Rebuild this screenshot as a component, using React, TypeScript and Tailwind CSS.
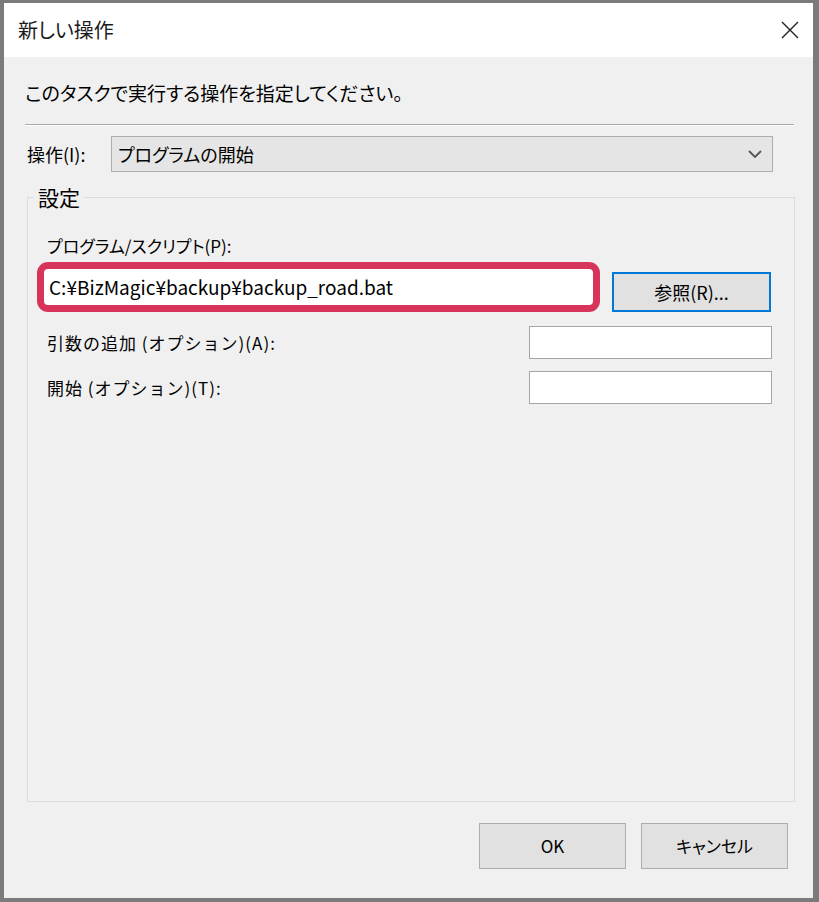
export default function App() {
  return (
    <div className="w-[819px] h-[902px] bg-[#7b7b7b] pt-[3px] pl-[4px] pr-[6px] pb-[4px] flex flex-col font-['Noto_Sans_CJK_JP','Noto_Sans',sans-serif] [font-feature-settings:'palt'] text-black">
      {/* Title bar */}
      <div className="h-[54px] shrink-0 bg-white flex items-center justify-between pl-[14px] pr-[14px]">
        <span className="text-[20px] leading-[24px] text-[#1b1b1b]">新しい操作</span>
        <svg width="18" height="18" viewBox="0 0 18 18" className="text-[#222]">
          <path d="M1 1 L17 17 M17 1 L1 17" stroke="currentColor" strokeWidth="1.4" fill="none" />
        </svg>
      </div>

      {/* Body */}
      <div className="flex-1 bg-[#f0f0f0] flex flex-col">
        <p className="mt-[24px] ml-[21px] text-[19px] leading-[24px]">
          このタスクで実行する操作を指定してください。
        </p>
        <div className="mt-[19px] ml-[21px] mr-[19px] border-t border-[#a8a8a8] border-b border-b-white" />

        {/* Action row */}
        <div className="mt-[10px] ml-[23px] flex items-center">
          <span className="w-[84px] text-[18px] leading-[24px] [font-feature-settings:normal]">操作(I):</span>
          <div className="w-[662px] h-[36px] bg-[#e5e5e5] border border-[#adadad] flex items-center justify-between pl-[6px] pr-[10px]">
            <span className="text-[18px] leading-[24px]">プログラムの開始</span>
            <svg width="14" height="8" viewBox="0 0 14 8">
              <path d="M1 1 L7 7 L13 1" stroke="#555" strokeWidth="1.8" fill="none" />
            </svg>
          </div>
        </div>

        {/* Settings group */}
        <fieldset className="mt-[13px] ml-[23px] w-[768px] h-[617px] border border-[#dcdcdc] shrink-0">
          <legend className="ml-[6px] px-[4px] text-[21px] leading-[24px]">設定</legend>
          <div className="flex flex-col">
            <span className="mt-[26px] pl-[19px] text-[17px] leading-[22px]">
              プログラム/スクリプト(P):
            </span>
            <div className="mt-[5px] flex items-end">
              <div className="ml-[9px] w-[563px] h-[50px] border-[7px] border-[#d6345a] rounded-[11px] bg-white flex items-center pl-[5px]">
                <span className="text-[19px] leading-[24px]">C:¥BizMagic¥backup¥backup_road.bat</span>
              </div>
              <div className="ml-[12px] w-[159px] h-[40px] border-2 border-[#0078d7] bg-[#e1e1e1] flex items-center justify-center">
                <span className="text-[18px] leading-[24px]">参照(R)...</span>
              </div>
            </div>
            <div className="mt-[14px] flex items-center pr-[22px]">
              <span className="flex-1 pl-[19px] text-[17px] leading-[22px] tracking-[1px] [font-feature-settings:normal]">
                引数の追加 (オプション)(A):
              </span>
              <div className="w-[243px] h-[33px] bg-white border border-[#a5a5a5]" />
            </div>
            <div className="mt-[12px] flex items-center pr-[22px]">
              <span className="flex-1 pl-[19px] text-[17px] leading-[22px] tracking-[1px] [font-feature-settings:normal]">
                開始 (オプション)(T):
              </span>
              <div className="w-[243px] h-[33px] bg-white border border-[#a5a5a5]" />
            </div>
          </div>
        </fieldset>

        {/* Buttons */}
        <div className="mt-[21px] flex justify-end gap-[15px] pr-[25px]">
          <div className="w-[147px] h-[46px] bg-[#e1e1e1] border border-[#adadad] flex items-center justify-center text-[17px]">
            OK
          </div>
          <div className="w-[147px] h-[46px] bg-[#e1e1e1] border border-[#adadad] flex items-center justify-center text-[17px]">
            キャンセル
          </div>
        </div>
      </div>
    </div>
  );
}
